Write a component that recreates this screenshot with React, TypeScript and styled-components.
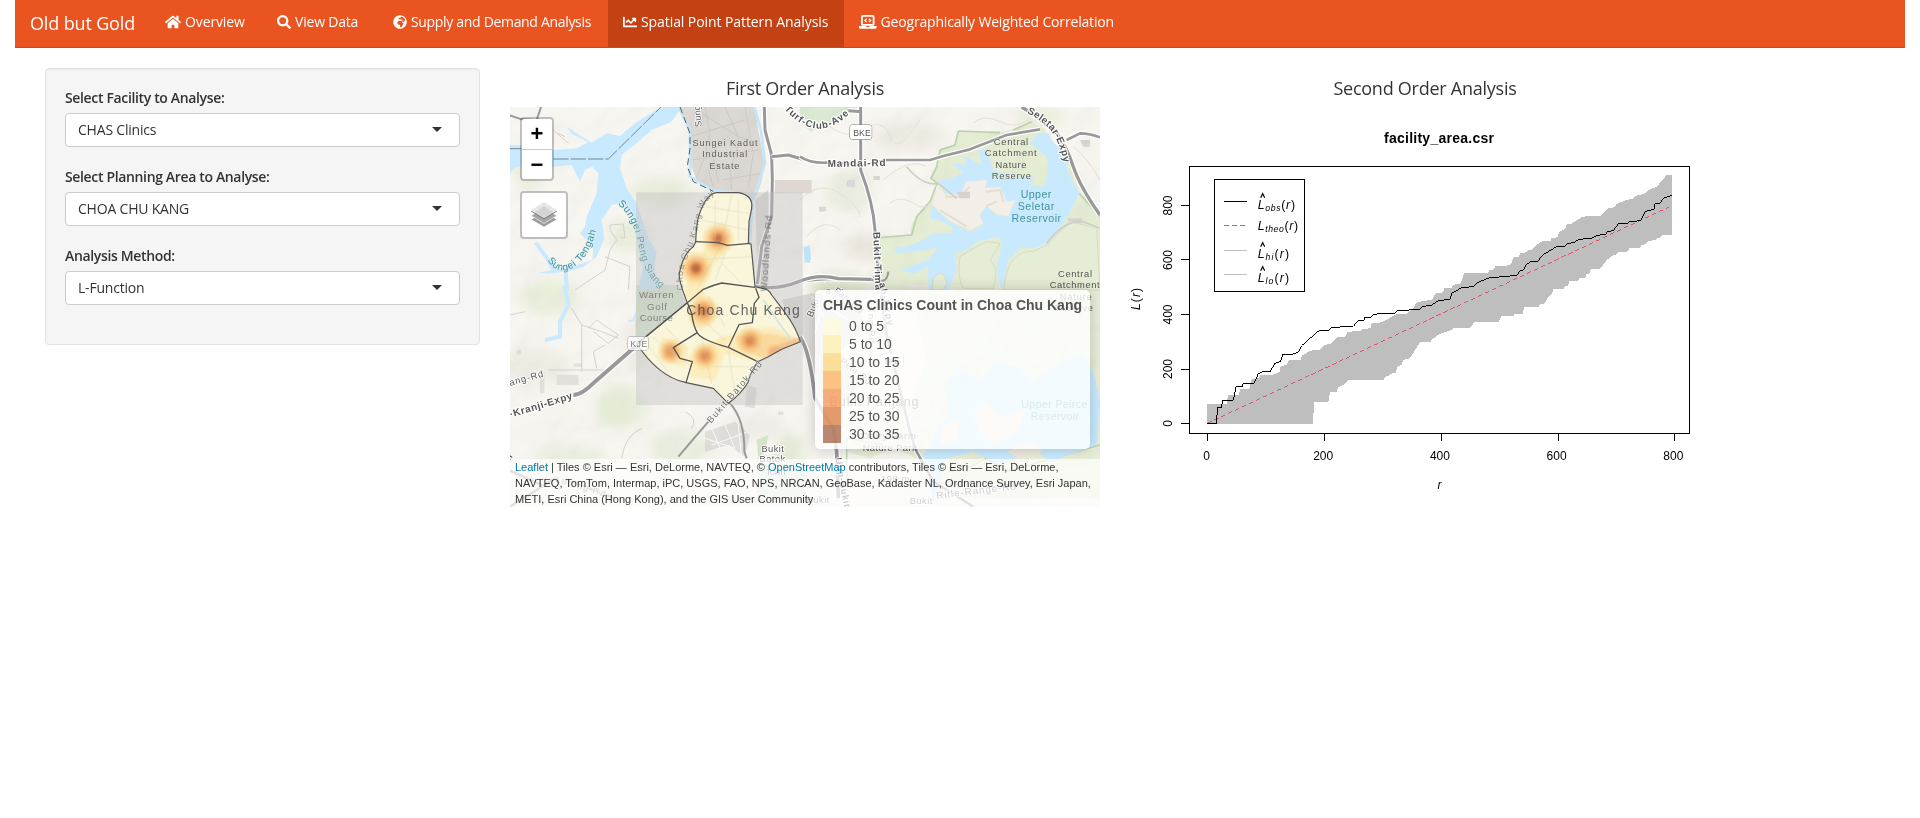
import React from "react";
import styled, { createGlobalStyle } from "styled-components";
import { FaHome, FaSearch, FaGlobeAfrica, FaChartLine } from "react-icons/fa";

const Global = createGlobalStyle`
  *, *::before, *::after { box-sizing: border-box; }
  body { margin: 0; background: #fff; color: #333; font: 400 14px/20px "Open Sans", "Noto Sans", sans-serif; }
`;

const Page = styled.div`
  padding: 0 15px;
`;

const Navbar = styled.nav`
  display: flex;
  height: 48px;
  padding-left: 15px;
  background: #e95420;
  border-bottom: 1px solid #c8491c;
  color: #fff;
`;

const Brand = styled.div`
  width: 120px;
  padding-top: 13px;
  font-size: 18px;
  letter-spacing: -0.15px;
  white-space: nowrap;
`;

const NavItem = styled.a<{ $width: number; $tracking: number; $active?: boolean }>`
  display: flex;
  align-items: center;
  gap: 4px;
  flex: none;
  width: ${(p) => p.$width}px;
  height: 47px;
  padding: 0 15px 4px;
  background: ${(p) => (p.$active ? "#c34113" : "transparent")};
  font-size: 14px;
  font-weight: 500;
  letter-spacing: ${(p) => p.$tracking}px;
  white-space: nowrap;
  svg { flex: none; }
`;

const Content = styled.main`
  display: flex;
  padding: 20px 15px 0 30px;
`;

const Well = styled.aside`
  width: 435px;
  height: 277px;
  padding: 19px;
  background: #f5f5f5;
  border: 1px solid #e3e3e3;
  border-radius: 4px;
  box-shadow: inset 0 1px 1px rgba(0, 0, 0, 0.05);
`;

const Field = styled.div`
  margin-bottom: 20px;
`;

const Label = styled.label`
  display: block;
  height: 25px;
  font-size: 14px;
  font-weight: 600;
  letter-spacing: -0.35px;
`;

const Select = styled.div`
  display: flex;
  align-items: center;
  justify-content: space-between;
  height: 34px;
  padding: 0 17px 1px 12px;
  background: #fff;
  border: 1px solid #ccc;
  border-radius: 4px;
  font-size: 14px;
  letter-spacing: -0.2px;
  &::after {
    content: "";
    border: 5px solid transparent;
    border-top-color: #333;
    border-bottom: 0;
  }
`;

const Panel = styled.section<{ $gap: number }>`
  width: 590px;
  margin-left: ${(p) => p.$gap}px;
`;

const Heading = styled.h4`
  margin: 0;
  height: 39px;
  padding-top: 10px;
  font-size: 18px;
  font-weight: 400;
  line-height: 20px;
  letter-spacing: -0.25px;
  text-align: center;
`;

const MapFrame = styled.div`
  position: relative;
  width: 590px;
  height: 400px;
  overflow: hidden;
  font-family: "Liberation Sans", Arial, sans-serif;
`;

const Drawing = styled.svg`
  display: block;
  font-family: "Liberation Sans", Arial, sans-serif;
`;

const Controls = styled.div`
  position: absolute;
  top: 10px;
  left: 10px;
  display: flex;
  flex-direction: column;
  align-items: flex-start;
  gap: 10px;
`;

const ControlBox = styled.div`
  border: 2px solid rgba(0, 0, 0, 0.22);
  border-radius: 4px;
  background: #fff;
  background-clip: padding-box;
`;

const ZoomButton = styled.div`
  width: 30px;
  height: 30px;
  color: #000;
  font: bold 22px/29px "Liberation Sans", Arial, sans-serif;
  text-align: center;
  & + & { border-top: 1px solid #ccc; }
`;

const LayersButton = styled.div`
  display: grid;
  place-items: center;
  width: 44px;
  height: 44px;
`;

const Legend = styled.div`
  position: absolute;
  top: 183px;
  left: 305px;
  width: 275px;
  height: 159px;
  padding: 6px 8px;
  border-radius: 5px;
  background: rgba(255, 255, 255, 0.8);
  box-shadow: 0 0 15px rgba(0, 0, 0, 0.2);
  color: #555;
  font-size: 14px;
  line-height: 18px;
  white-space: nowrap;
`;

const LegendTitle = styled.strong`
  display: block;
  margin-bottom: 3px;
`;

const LegendRow = styled.div`
  display: flex;
  gap: 8px;
  height: 18px;
`;

const Swatch = styled.i<{ $color: string }>`
  width: 18px;
  height: 18px;
  background: ${(p) => p.$color};
  opacity: 0.7;
`;

const Attribution = styled.div`
  position: absolute;
  left: 0;
  right: 0;
  bottom: 0;
  height: 48px;
  padding: 0 5px;
  background: rgba(255, 255, 255, 0.7);
  font-size: 11px;
  line-height: 16px;
  white-space: nowrap;
  a { color: #0078a8; }
`;

const LaptopCode = () => (
  <svg width="17.500" height="14" viewBox="0 0 17.500 14" fill="none" stroke="#fff">
    <rect x="2.900" y=".9" width="11.700" height="9" rx="1" strokeWidth="1.800" />
    <path d="M7.600 3.700 5.900 5.400l1.700 1.700M9.900 3.700 11.600 5.400 9.900 7.100" strokeWidth="1.300" />
    <path d="M0 11h17.500v1.200q0 1.600-1.600 1.600H1.600Q0 13.800 0 12.200z" fill="#fff" stroke="none" />
    <path d="M7.200 11.500h3.200" stroke="#e95420" />
  </svg>
);

const navItems = [
  { label: "Overview", icon: <FaHome size={16} />, width: 112, tracking: -0.12 },
  { label: "View Data", icon: <FaSearch size={14} />, width: 116, tracking: -0.2 },
  { label: "Supply and Demand Analysis", icon: <FaGlobeAfrica size={14} />, width: 230, tracking: -0.32 },
  { label: "Spatial Point Pattern Analysis", icon: <FaChartLine size={14} />, width: 236, tracking: -0.08, active: true },
  { label: "Geographically Weighted Correlation", icon: <LaptopCode />, width: 286, tracking: -0.17 },
];

const fields = [
  ["Select Facility to Analyse:", "CHAS Clinics"],
  ["Select Planning Area to Analyse:", "CHOA CHU KANG"],
  ["Analysis Method:", "L-Function"],
];

const legend = [
  ["0 to 5", "#fdfbd9"],
  ["5 to 10", "#feefa7"],
  ["10 to 15", "#fed374"],
  ["15 to 20", "#feab50"],
  ["20 to 25", "#f38c46"],
  ["25 to 30", "#d5712f"],
  ["30 to 35", "#9d5435"],
];

const NW = "translate(-5 -37) scale(.33333)";
const NE = "translate(290 -37) scale(.33333)";
const SW = "translate(-5 178) scale(.33333)";
const SE = "translate(290 178) scale(.33333)";
const TOWN = "translate(115 73) scale(.33333)";

const Road = ({ d, w, casing = true }: { d: string; w: number; casing?: boolean }) => (
  <g fill="none" strokeLinejoin="round">
    {casing && <path d={d} stroke="#fff" strokeWidth={w + 7} />}
    <path d={d} stroke="#999" strokeWidth={w} />
  </g>
);

type HeatProps = { x: number; y: number; r: number; strong?: number };
const Heat = ({ x, y, r, strong = 1 }: HeatProps) => (
  <g>
    <circle cx={x} cy={y} r={r} fill="#fed98a" opacity=".5" />
    <circle cx={x} cy={y} r={r * 0.8} fill="#fdc070" opacity=".55" />
    <circle cx={x} cy={y} r={r * 0.6} fill="#f3a055" opacity=".65" />
    <circle cx={x} cy={y} r={r * 0.4} fill="#dd7a3a" opacity={0.7 * strong} />
    <circle cx={x} cy={y} r={r * 0.24} fill="#a5532c" opacity={Math.max(0, 0.85 * (strong - 0.35))} />
  </g>
);

const blobs: [number, number, number, number, string][] = [
  [40, 190, 30, 18, "#e9eedb"], [120, 130, 22, 14, "#e9eedb"], [25, 260, 35, 20, "#efede4"],
  [150, 85, 30, 14, "#e8edda"], [110, 300, 24, 22, "#e5edd7"], [60, 350, 35, 12, "#eaefe0"],
  [170, 340, 30, 18, "#e9eedf"], [340, 85, 24, 20, "#eaeddf"], [360, 140, 26, 14, "#ebe7de"],
  [400, 30, 36, 14, "#eeebe3"], [330, 180, 30, 14, "#e2ebd2"], [380, 175, 18, 18, "#e9e6db"],
  [530, 10, 26, 9, "#e9eedb"], [560, 90, 18, 20, "#efebe3"], [250, 320, 24, 14, "#efeee8"],
  [280, 345, 14, 20, "#e6ecd8"], [130, 240, 14, 26, "#efebe3"], [20, 60, 16, 22, "#e9edda"],
];

const townOutline = "M212 185C215 120 220 100 240 65Q260 35 280 38L340 38Q385 45 380 85L372 125 370 190 378 192 390 320 412 325Q430 325 440 345C470 385 510 430 526 485L470 508 430 530 398 545Q375 580 370 605 350 640 310 670L265 625 183 608Q100 590 36 492L187 368Q160 300 163 280 175 220 205 200Z";

const MapTiles = () => (
  <Drawing width="590" height="400" viewBox="0 0 590 400">
    <defs>
      <filter id="soft" x="-50%" y="-50%" width="200%" height="200%"><feGaussianBlur stdDeviation="6" /></filter>
      <filter id="melt" x="-30%" y="-30%" width="160%" height="160%"><feGaussianBlur stdDeviation="3.500" /></filter>
      <filter id="relief" x="0" y="0" width="100%" height="100%">
        <feTurbulence type="fractalNoise" baseFrequency=".022" numOctaves="3" seed="8" />
        <feDiffuseLighting surfaceScale="7" lightingColor="#fff"><feDistantLight azimuth="225" elevation="62" /></feDiffuseLighting>
      </filter>
      <path id="tengah" d="M127 570C165 640 262 590 278 448" />
      <path id="peng" d="M338 402C395 450 395 520 411 570S450 640 475 662" />
      <path id="turf" d="M838 118C900 185 960 200 1035 130" />
      <path id="seletar" d="M680 128C740 160 775 190 790 275" />
      <path id="cck" d="M536 660C520 590 565 540 580 470S600 400 638 360" />
      <clipPath id="town"><path d={townOutline} /></clipPath>
    </defs>
    <rect width="590" height="400" fill="#f8f6f1" />
    <g filter="url(#soft)">
      {blobs.map(([x, y, rx, ry, c], i) => <ellipse key={i} cx={x} cy={y} rx={rx} ry={ry} fill={c} />)}
    </g>

    {/* land cover */}
    <g transform={NW}>
      <path d="M525 111 552 190 555 280 575 330 625 362Q700 372 735 385L745 395Q775 340 778 280L760 180 750 111Z" fill="#dcd8d4" />
      <g fill="none" stroke="#c8c2ba" strokeWidth="2">
        <path d="M600 111 615 190 600 260 570 330M660 111 700 200 695 240 675 300 680 360M555 200 720 150M560 270 760 240M650 330 770 310M720 111 745 250 730 350M610 300 625 350" />
        <path d="M590 130 700 200 760 220M620 240 640 340" />
      </g>
    </g>
    <g transform={NE}>
      <path d="M0 111H175L150 125 85 165 30 185 0 150Z" fill="#dbead3" />
      <path d="M475 185 600 188 700 160 730 175 810 280 840 370 900 440V660H240V503L330 500 335 460 385 400 412 335 395 325 410 295 420 240 465 225Z" fill="#e5edd5" />
      <g fill="none" stroke="#bcd5ac" strokeWidth="5"><path d="M475 183 600 188M475 183 465 225 420 240 410 290 393 325 412 340 390 395 350 440 335 495 240 503M640 180 695 155M838 370 900 440" /></g>
      <path d="M60 140Q130 220 190 180T270 200 360 150M250 330Q330 260 380 290M0 390Q60 330 120 370T180 440M20 500Q70 440 120 480M520 160Q550 130 600 155T690 145M420 410 360 410Q300 370 270 400M820 230Q860 260 900 330" fill="none" stroke="#e9e1d6" strokeWidth="3" />
      <path d="M140 333H160V350H140ZM57 410H78V423H57ZM220 318H240V330H220ZM840 210H870V230H850ZM800 445H845V460H810Z" fill="#dad7d3" />
    </g>
    <g transform={SE}>
      <path d="M330 0H900V640H420L350 520 280 490 210 520 140 500 170 410 330 360 380 220Z" fill="#e9efd9" />
      <path d="M140 620V460L250 480M500 550 560 520 620 560 900 480" fill="none" stroke="#bdd6ad" strokeWidth="4" />
    </g>
    <g transform={SW}>
      <path d="M395 0H520L545 60 430 150 390 155Z" fill="#d9e6d0" />
      <path d="M200 70 230 120 290 140 340 160M250 130 275 105 340 150 310 175 265 140M230 120 230 260M130 255H300M300 180 265 200 275 250M15 90 60 80M350 520Q360 450 410 430M540 380Q580 400 560 430" fill="none" stroke="#d6d3ce" strokeWidth="3" />
      <g fill="#d5d2ce"><path d="M155 270H220V300H155ZM105 270H118V325H105ZM205 235H230V245H205ZM35 195H48V208H35Z" opacity=".5" /><path d="M600 440 690 410 735 450 720 515 670 480 600 500ZM725 300 755 310 750 370 720 365ZM820 380H835V390H820Z" opacity=".6" /></g>
      <g fill="none" stroke="#fafafa" strokeWidth="3"><path d="M600 460 690 490M620 430 650 500M660 420 690 490M700 420 710 520M620 480 730 440" /></g>
      <path d="M755 465 790 450 780 500 760 520Z" fill="#d3e4c7" />
      <path d="M755 520H900V650H755Z" fill="#e2edda" />
    </g>
    <rect width="590" height="400" filter="url(#relief)" opacity=".13" style={{ mixBlendMode: "multiply" }} />

    {/* water */}
    <g transform={NW}>
      <path d="M470 111 438 130 390 160 345 198 305 190 260 218 185 170 200 192 250 217 215 235 150 240 60 225 15 225V310L30 292 100 285 145 290 200 285 225 335 240 300 262 290 280 310 275 370 245 440 240 470 225 490 265 530 262 570 200 590 165 595 100 608 130 612 175 605 180 660 192 660 188 605 235 590 275 560 298 505 290 450 320 405 350 400 385 440 395 500 415 590 400 660H460L448 590 455 545 430 505 395 400 365 355 345 295 350 255 400 215 440 180 500 155 530 111Z" fill="#c9eafe" />
      <path d="M92 518 130 570 145 600" fill="none" stroke="#c9eafe" strokeWidth="12" />
      <path d="M520 111 555 180 555 320 625 362Q735 370 742 400L735 520M748 111 768 180 780 280 745 390" fill="none" stroke="#c3e6fa" strokeWidth="8" />
      <path d="M525 111 555 190 555 235 547 290 565 335 625 364" fill="none" stroke="#4f5f68" strokeWidth="3" strokeDasharray="20 12" />
      <path d="M15 236H48M145 267H310L468 111" fill="none" stroke="#6f8794" strokeWidth="3" strokeDasharray="46 6" />
      <Road d="M15 136 50 148 95 150 108 111" w={6} casing={false} />
      <path d="M300 600 315 540 335 510 315 480 315 465 355 462 360 505 345 500M300 560 375 590 370 660M210 660 300 600M145 180 190 220M180 200 160 190" fill="none" stroke="#d4d1cc" strokeWidth="3" />
    </g>
    <g transform={NE}>
      <path d="M715 190 690 220 740 260 745 290 735 350 705 345 690 355 700 320 640 315 580 300 560 240 535 240 545 285 490 255 500 285 455 280 490 310 455 325 415 330 435 370 480 375 500 335 560 330 555 355 600 350 620 395 650 390 620 440 590 435 560 410 540 435 550 465 510 485 450 455 395 405 390 445 430 455 460 475 455 490 400 490 370 510 320 530 282 530 290 550 380 540 415 530 385 570 300 600 340 612 385 590 385 660H445L470 600 465 550 510 535 530 515 600 500 605 530 595 570 590 600 605 660 625 570 665 530 700 535 740 520 800 445 838 370 805 310 790 240 760 220 745 190Z" fill="#c9eafe" />
      <path d="M435 375 480 375 500 335 560 330 555 355 600 350 620 395 645 390 625 438 590 432 560 408 538 435 550 460 510 480 450 452 398 405 410 345Z" fill="#f3eee8" />
      <path d="M435 380 480 380 510 350M555 365 600 360 610 395M560 408 590 395M420 420 500 470" fill="none" stroke="#e0d5c6" strokeWidth="6" opacity=".7" />
      <path d="M470 365H510V385H480Z" fill="#d5d2cf" />
      <path d="M480 560Q470 620 490 655H580Q600 600 570 570L600 520 560 515 530 530ZM400 625Q430 590 440 640L430 660H395ZM620 610Q640 540 700 545L740 525 810 455 890 475 900 660H610Z" fill="#e6edd6" stroke="#d5dcc0" strokeWidth="3" />
      <path d="M10 530H30V580L15 575Z" fill="#bfe4fa" />
      <path d="M320 290Q370 350 415 340L470 385M740 520Q790 450 850 455L900 475" fill="none" stroke="#d0cdc8" strokeWidth="5" />
    </g>
    <g transform={SE}>
      <path d="M570 160 590 230 660 250 700 290 780 230 850 210 880 260 900 350 890 480 750 530 700 490 600 540 520 500 440 520 400 650 370 510 450 370 430 300 470 250 550 280 590 220Z" fill="#c9eafe" />
      <path d="M520 390 560 350 600 400 680 370 650 440 580 480 540 440ZM430 420 480 400 470 470 420 480ZM620 500 690 470 730 500 660 520ZM340 0 360 90 380 0Z" fill="#eee9dd" />
    </g>
    <g transform={SW}>
      <path d="M178 0 190 60 165 110V155L120 165" fill="none" stroke="#c9eafe" strokeWidth="12" />
      <path d="M395 80 385 105 370 110" stroke="#c9eafe" strokeWidth="6" fill="none" />
    </g>

    <g transform={TOWN}>
      <path d="M470 360 560 340 640 350 700 360 720 440 640 520 700 620 640 690 570 640 530 500Z" fill="#dddad7" />
      <path d="M440 40H560V0H440Z" fill="#ded7d2" />
      <path d="M390 60 430 30 430 330 400 330Z" fill="#d9d7d6" />
      <path d="M480 120 540 180M490 260 560 230 600 310M560 350 650 500M600 340 570 460M620 390 690 430" stroke="#f6f5f3" strokeWidth="5" fill="none" />
      <path d="M582 85 600 80 603 94 584 96ZM668 0H690V20H668Z" fill="#d8d9d9" />
      <path d="M540 200 555 195 558 240 538 250Z" fill="#bfe4fa" />
    </g>

    {/* main roads */}
    <g transform={NW}><Road d="M778 111 780 180 800 255 802 330 800 440 770 530 755 660" w={9} /><Road d="M800 260 850 255 900 270" w={9} /></g>
    <g transform={NE}><Road d="M0 260Q30 280 80 278L190 285 260 270 390 270 430 258 510 238 620 195 720 178" w={8} /><Road d="M182 111V300Q220 400 225 480L240 660M145 122 185 125" w={9} /><Road d="M665 111 710 140 770 190Q800 230 820 290T900 435" w={10} /><Road d="M800 210 840 190Q870 190 900 202M0 635Q60 625 110 627L220 630" w={8} /></g>
    <g transform={SW}><Road d="M205 330Q230 330 270 290L385 190 400 182" w={12} /><Road d="M670 350Q720 400 718 500L725 520M520 515 610 410" w={6} casing={false} /><Road d="M0 550 110 600M15 665 150 580M200 590 330 640" w={7} casing={false} /></g>
    <g transform={SE}><Road d="M0 155Q30 200 45 340L100 430 110 500 115 640" w={11} /><Road d="M240 0 260 150 330 440 350 500 400 590 520 665" w={8} /></g>
    <g transform={TOWN}><Road d="M390 320Q460 330 520 305T640 296L740 298" w={10} /><Road d="M790 275Q785 320 745 290" w={6} casing={false} /></g>

    {/* place names lying beneath the raster */}
    <g transform={NW} fill="#5f5f5f" stroke="#fff" strokeWidth="4" paintOrder="stroke" fontSize="30">
      <text fill="#3d8f95" stroke="#dceff5"><textPath href="#tengah" textLength="225">Sungei Tengah</textPath></text>
      <text fill="#3d8f95" stroke="#dceff5"><textPath href="#peng" textLength="290">Sungei Peng Siang</textPath></text>
      <text transform="translate(590 170) rotate(-95)" fontSize="28">Sung</text>
      <g stroke="#dcd8d4" textAnchor="middle" fontSize="27">
        <text x="660" y="227" textLength="195">Sungei Kadut</text>
        <text x="659" y="262" textLength="135">Industrial</text>
        <text x="658" y="297" textLength="90">Estate</text>
      </g>
    </g>

    {/* density raster and subzones */}
    <g transform={TOWN}>
      <path d="M33 37H533V675H33Z" fill="#bdbdbd" opacity=".4" />
      <g opacity=".88">
        <g clipPath="url(#town)">
          <path d="M30 30H530V680H30Z" fill="#fdfadb" />
          <g filter="url(#melt)">
            <path d="M250 185 190 300 175 350 230 360 250 270 300 220ZM210 360 190 420 220 450 260 430ZM290 470 440 440 530 480 530 500 400 545 300 520 270 600 200 590 190 530ZM110 470 190 500 180 560 110 540Z" fill="#feefb8" />
            <path d="M330 470 430 460 530 480 430 540 350 510Z" fill="#fdd998" />
          </g>
          <g filter="url(#melt)">
            <Heat x={280} y={176} r={46} /><Heat x={213} y={265} r={48} strong={1.2} /><Heat x={235} y={393} r={46} strong={0.85} />
            <Heat x={375} y={482} r={42} strong={0.7} /><Heat x={240} y={528} r={40} strong={0.65} /><Heat x={137} y={515} r={38} strong={0.5} />
            <Heat x={450} y={518} r={30} strong={0.4} />
            <path d="M430 505 530 470 530 500 430 540Z" fill="#f3b377" opacity=".7" />
          </g>
          <g fill="none" stroke="#cfc7a8" strokeWidth="2" opacity=".6">
            <path d="M240 80 370 100M230 120 370 150M270 60V180M320 45 290 190 220 320M340 60V180M300 220 270 300M200 240 380 230M290 250 350 310M80 470 200 560M120 440 180 500M230 470 260 610M310 510 330 640M260 560 390 560M350 450 420 520M60 480 130 580M200 390 300 480M250 350 300 440" />
          </g>
          <path d="M415 360 470 440 500 480" fill="none" stroke="#cbe6e8" strokeWidth="5" />
        </g>
      </g>
      <g fill="none" stroke="#555" strokeWidth="4" strokeLinejoin="round">
        <path d={townOutline} strokeWidth="3.500" />
        <path d="M212 185 280 188 308 196 375 190M36 492 187 368 235 328Q265 315 290 309L390 322M187 368 200 400Q205 440 218 460T310 502L398 545M218 457 145 503 165 535 202 545 183 608M310 502 342 434 382 428 388 370 402 352 392 325" />
      </g>
    </g>
    <g transform={NW} fill="#777" fontSize="27" opacity=".75">
      <text><textPath href="#cck" textLength="310">Choa Chu Kang Way</textPath></text>
      <text transform="translate(786 665) rotate(-86)" fontSize="29" fill="#555" textLength="228">Woodlands-Rd</text>
    </g>

    <g fill="#555" stroke="#fff" paintOrder="stroke" strokeLinejoin="round">
      <g transform={NW} strokeWidth="7">
        <text fontSize="29" fontWeight="bold"><textPath href="#turf" textLength="225">Turf-Club-Ave</textPath></text>
      </g>
      <g transform={NE} fontSize="30" strokeWidth="6">
        <g fontWeight="bold">
          <text transform="translate(83 291) rotate(-1)" textLength="174">Mandai-Rd</text>
          <text><textPath href="#seletar" textLength="195">Seletar-Expy</textPath></text>
          <text transform="translate(220 486) rotate(88)" textLength="174">Bukit-Tima</text>
        </g>
        <rect x="150" y="165" width="65" height="43" rx="7" fill="#fff" stroke="#777" strokeWidth="3" />
        <text x="186" y="197" fontSize="26" strokeWidth="0" textAnchor="middle" textLength="52">BKE</text>
        <g stroke="#e6edd6" strokeWidth="3" textAnchor="middle" fontSize="28">
          <text x="633" y="224" textLength="103">Central</text><text x="632" y="257" textLength="155">Catchment</text>
          <text x="633" y="293" textLength="93">Nature</text><text x="634" y="327" textLength="117">Reserve</text>
          <text x="825" y="620" textLength="102">Central</text><text x="824" y="654" textLength="150">Catchment</text>
        </g>
        <g fill="#46929e" stroke="none" textAnchor="middle" fontSize="32">
          <text x="708" y="384" textLength="92">Upper</text><text x="708" y="420" textLength="110">Seletar</text><text x="709" y="455" textLength="149">Reservoir</text>
        </g>
      </g>
      <g transform={SW} strokeWidth="5" fontSize="28">
        <rect x="369" y="155" width="61" height="40" rx="7" fill="#fff" stroke="#888" strokeWidth="3" opacity=".75" />
        <text x="376" y="186" textLength="51" fontSize="27" stroke="none" opacity=".75">KJE</text>
        <text transform="translate(16 303) rotate(-16)" textLength="104">ang-Rd</text>
        <text transform="translate(17 398) rotate(-17)" fontSize="30" fontWeight="bold" textLength="195">·Kranji-Expy</text>
        <text transform="translate(618 416) rotate(-49)" strokeWidth="2" opacity=".85" textLength="235">Bukit-Batok-Rd</text>
        <g stroke="none" textAnchor="middle" opacity=".65" fontSize="29">
          <text x="454" y="39" textLength="104">Warren</text>
          <text x="456" y="74" textLength="60">Golf</text>
          <text x="454" y="107" textLength="100">Course</text>
        </g>
        <text x="544" y="89" stroke="none" fontSize="42" opacity=".9" textLength="340">Choa Chu Kang</text>
        <text x="803" y="501" textAnchor="middle" textLength="67">Bukit</text>
        <text x="802" y="532" textAnchor="middle" textLength="77">Batok</text>
        <text x="812" y="569" textAnchor="middle" textLength="60">Town</text>
        <text transform="translate(150 590) rotate(17)" textLength="155" fontSize="27">Lutong Rd</text>
        <text transform="translate(10 535) rotate(-55)" fontWeight="bold">m</text>
      </g>
      <g transform={SE} strokeWidth="5" fontSize="28">
        <text x="77" y="26" textLength="55">ə-an</text>
        <text transform="translate(37 98) rotate(-67)">Buki</text>
        <text transform="translate(100 20) rotate(38)" textLength="105">Panjang</text>
        <text transform="translate(203 65) rotate(88)" textLength="110">Kng-Rd</text>
        <text transform="translate(238 -5) rotate(79)" fontWeight="bold" textLength="130">ah-Expy</text>
        <text transform="translate(118 232) rotate(38)" textLength="110">Petir-Rd</text>
        <rect x="247" y="205" width="62" height="43" rx="7" fill="#fff" stroke="#888" strokeWidth="3" />
        <text x="255" y="237" textLength="46" fontSize="26" stroke="none">BKE</text>
        <text x="88" y="363" fontSize="38" stroke="none" textLength="268">Bukit Panjang</text>
        <text x="187" y="463" stroke="none" textLength="160">Dairy Farm</text>
        <text x="188" y="498" stroke="none" textLength="162">Nature Park</text>
        <text x="779" y="46" stroke="none" textLength="96">Nature</text>
        <text x="762" y="79" stroke="none" textLength="117">Reserve</text>
        <g fill="#46929e" stroke="none" fontSize="32"><text x="664" y="368" textLength="198">Upper Peirce</text><text x="692" y="404" textLength="145">Reservoir</text></g>
        <text x="243" y="590" textLength="85">198 m</text>
        <text x="20" y="655" textLength="68">Bukit</text>
        <text x="329" y="657" textLength="68">Bukit</text>
        <text transform="translate(106 520) rotate(80)" fontWeight="bold" textLength="150">Upp-Bukit</text>
        <text transform="translate(410 642) rotate(-7)" fontSize="30" textLength="240">Rifle-Range-Rd</text>
      </g>
    </g>
  </Drawing>
);

const LayersIcon = () => (
  <svg width="26" height="26" viewBox="0 0 26 26">
    <path d="M0 17.500 13 10l13 7.500L13 25z" fill="#9b9b9b" stroke="#fff" strokeWidth=".6" />
    <path d="M0 13.700 13 6l13 7.700L13 21.500z" fill="#a6a6a6" stroke="#fff" strokeWidth=".6" />
    <path d="M0 9.500 13 1.300l13 8.200-13 8z" fill="#777" />
    <path d="M0 8.500 13 .5l13 8-13 8z" fill="#d4d4d4" />
    <path d="M0 8.500 13 .5l13 8-3.500 2L13 4 3.500 10.500z" fill="#e6e6e6" />
  </svg>
);

const upper = "292,1002 350,1002 354,975 387,975 390,957 418,957 425,927 445,925 452,915 487,915 510,905 512,888 530,885 537,870 572,870 575,858 600,842 630,840 640,827 665,820 682,802 705,800 712,786 752,782 757,777 782,775 785,760 810,758 830,750 845,740 860,733 890,732 910,714 920,697 945,692 965,690 977,670 1000,667 1002,655 1025,653 1030,645 1052,640 1062,610 1134,609 1138,600 1153,598 1155,588 1190,587 1203,582 1210,563 1227,560 1230,550 1250,547 1253,541 1267,538 1273,530 1290,518 1300,513 1322,512 1325,504 1343,502 1347,487 1365,477 1370,463 1388,460 1393,455 1415,442 1432,438 1472,438 1480,430 1495,415 1513,412 1520,402 1550,390 1572,385 1575,378 1605,370 1615,360 1640,350 1658,330 1670,315 1686,315";
const lower = "1686,495 1657,495 1653,502 1640,505 1635,511 1618,512 1608,522 1595,525 1590,534 1558,535 1552,545 1525,546 1520,553 1510,555 1490,570 1475,590 1470,597 1443,598 1438,610 1430,612 1425,625 1408,625 1405,633 1378,634 1373,648 1363,650 1360,657 1330,657 1325,673 1315,680 1305,700 1290,703 1285,711 1242,711 1239,732 1212,733 1210,738 1173,739 1167,755 1092,757 1088,765 1077,774 1030,775 1025,780 990,792 983,795 965,810 962,816 930,817 920,832 900,865 880,870 875,885 862,890 858,908 840,912 838,918 825,920 822,930 715,930 700,945 685,952 680,965 660,967 655,995 612,997 609,1061 292,1061";
const observed = "292,1060 320,1060 322,1012 335,1012 337,991 370,991 378,950 397,950 400,940 432,940 445,911 457,905 480,905 495,880 512,875 518,853 547,853 565,847 575,827 600,805 628,781 655,781 665,772 690,772 692,769 730,769 745,751 762,751 765,742 782,742 790,734 807,731 853,731 862,721 895,721 900,718 930,717 937,710 965,705 985,692 1020,688 1025,670 1055,653 1090,650 1102,638 1138,623 1180,620 1222,616 1230,602 1240,600 1250,583 1262,575 1282,575 1300,553 1315,545 1340,530 1365,528 1375,520 1395,517 1405,508 1445,505 1460,497 1488,492 1492,485 1510,482 1525,461 1550,461 1560,455 1592,452 1605,425 1632,417 1635,402 1650,400 1660,385 1686,376";

const curves = [
  { sub: "obs", y: 417, line: 394, width: 112, dash: false, color: "#000", hat: true },
  { sub: "theo", y: 480, line: 466, width: 121, dash: true, color: "#df536b", hat: false },
  { sub: "hi", y: 564, line: 541, width: 94, dash: false, color: "#bebebe", hat: true },
  { sub: "lo", y: 636, line: 613, width: 94, dash: false, color: "#bebebe", hat: true },
];

const EnvelopePlot = () => (
  <Drawing width="590" height="400" viewBox="0 0 590 400">
    <text x="309" y="36" fontSize="14" fontWeight="bold" textAnchor="middle" textLength="110">facility_area.csr</text>
    <g transform="translate(-20 -37) scale(.33333)" shapeRendering="crispEdges">
      <polygon points={`${upper} ${lower}`} fill="#bebebe" />
      <path d="M292 1060 1677 411" stroke="#df536b" strokeWidth="3" strokeDasharray="14 9" />
      <polyline points={observed} fill="none" stroke="#000" strokeWidth="3" />
    </g>
    <g fill="none" stroke="#000" shapeRendering="crispEdges">
      <path d="M59.500 59.500H559.500V326.500H59.500Z" />
      <path d="M77.500 326v8M194.500 326v8M311.500 326v8M428.500 326v8M544.500 326v8M51 316.500h8M51 262.500h8M51 207.500h8M51 152.500h8M51 98.500h8" />
      <rect x="84.500" y="72.500" width="90" height="112" fill="#fff" />
    </g>
    <g fontSize="12" textAnchor="middle">
      {[0, 200, 400, 600, 800].map((v, i) => <text key={v} x={76.5 + i * 116.7} y="353">{v}</text>)}
      {[0, 200, 400, 600, 800].map((v, i) => <text key={v} transform={`translate(42 ${316.5 - i * 54.5}) rotate(-90)`}>{v}</text>)}
      <text x="309.500" y="382" fontStyle="italic">r</text>
      <text transform="translate(10 192) rotate(-90)" textLength="22"><tspan fontStyle="italic">L</tspan>(<tspan fontStyle="italic">r</tspan>)</text>
    </g>
    <g transform="translate(-20 -37) scale(.33333)">
      {curves.map((c) => (
        <g key={c.sub}>
          <path d={`M342 ${c.line}H411`} stroke={c.color} strokeWidth="3" strokeDasharray={c.dash ? "14 10" : undefined} shapeRendering="crispEdges" />
          <text x="443" y={c.y} fontSize="37" fontStyle="italic" textLength={c.width}>
            L<tspan fontSize="26" dy="7">{c.sub}</tspan><tspan dy="-7" fontStyle="normal">(</tspan>r<tspan fontStyle="normal">)</tspan>
          </text>
          {c.hat && <path d={`M452 ${c.y - 34}l6-12 6 12`} fill="none" stroke="#000" strokeWidth="3.500" />}
        </g>
      ))}
    </g>
  </Drawing>
);

export default function App() {
  return (
    <Page>
      <Global />
      <Navbar>
        <Brand>Old but Gold</Brand>
        {navItems.map((n) => (
          <NavItem key={n.label} $width={n.width} $tracking={n.tracking} $active={n.active}>{n.icon}<span>{n.label}</span></NavItem>
        ))}
      </Navbar>
      <Content>
        <Well>
          {fields.map(([label, value]) => (
            <Field key={label}>
              <Label>{label}</Label>
              <Select>{value}</Select>
            </Field>
          ))}
        </Well>
        <Panel $gap={30}>
          <Heading>First Order Analysis</Heading>
          <MapFrame>
            <MapTiles />
            <Controls>
              <ControlBox>
                <ZoomButton>+</ZoomButton>
                <ZoomButton>−</ZoomButton>
              </ControlBox>
              <ControlBox>
                <LayersButton><LayersIcon /></LayersButton>
              </ControlBox>
            </Controls>
            <Legend>
              <LegendTitle>CHAS Clinics Count in Choa Chu Kang</LegendTitle>
              {legend.map(([label, color]) => (
                <LegendRow key={label}><Swatch $color={color} />{label}</LegendRow>
              ))}
            </Legend>
            <Attribution>
              <div><a>Leaflet</a> | Tiles © Esri — Esri, DeLorme, NAVTEQ, © <a>OpenStreetMap</a> contributors, Tiles © Esri — Esri, DeLorme,</div>
              <div>NAVTEQ, TomTom, Intermap, iPC, USGS, FAO, NPS, NRCAN, GeoBase, Kadaster NL, Ordnance Survey, Esri Japan,</div>
              <div>METI, Esri China (Hong Kong), and the GIS User Community</div>
            </Attribution>
          </MapFrame>
        </Panel>
        <Panel $gap={30}>
          <Heading>Second Order Analysis</Heading>
          <EnvelopePlot />
        </Panel>
      </Content>
    </Page>
  );
}
